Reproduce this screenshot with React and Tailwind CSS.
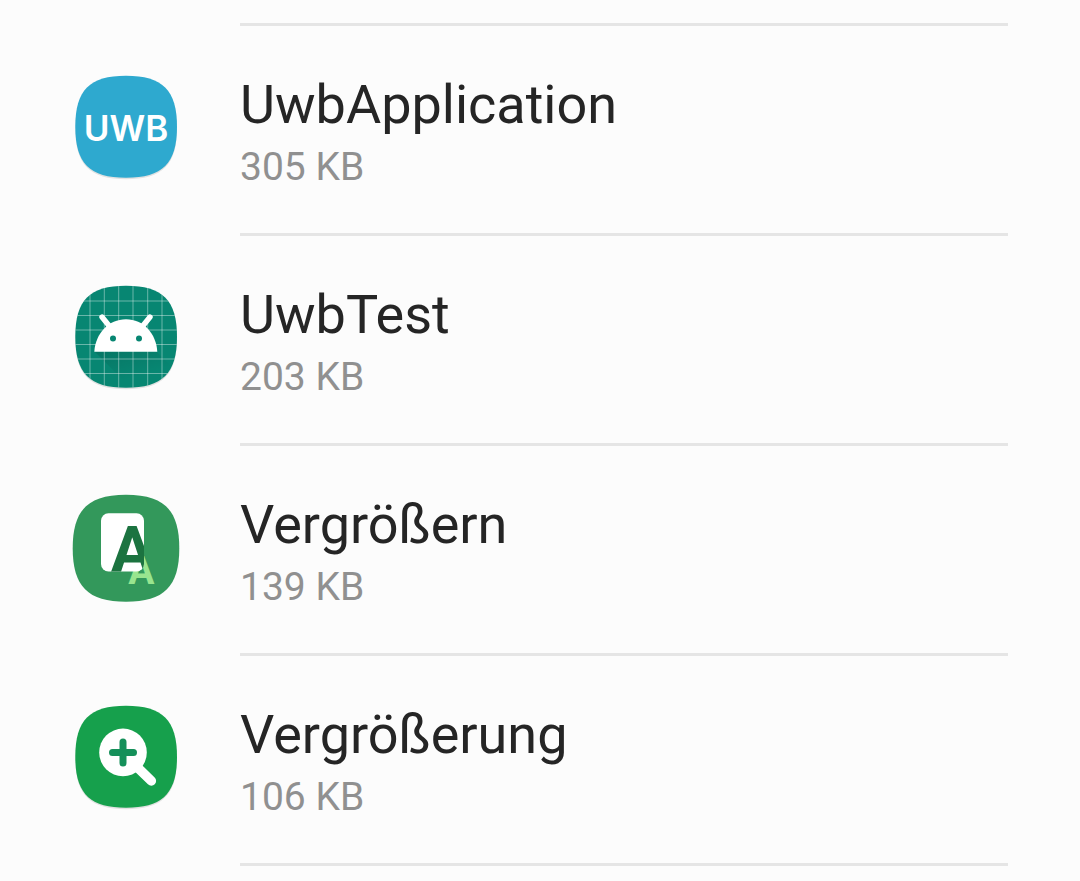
const SQUIRCLE = "M54 1.7C17.5 1.7 3.3 16 3.3 52.7S17.5 103.7 54 103.7S105 89.4 105 52.7S90.5 1.7 54 1.7Z";
const SQUIRCLE_LARGE = "M54 .7C16 .7 .7 16 .7 54.2S16 107.7 54 107.7S107.3 92.4 107.3 54.2S92 .7 54 .7Z";

function Shape({ color }) {
  return (
    <>
      <path d={SQUIRCLE} fill="#000" opacity="0.1" transform="translate(0 1.5)" />
      <path d={SQUIRCLE} fill={color} />
    </>
  );
}

function UwbIcon() {
  return (
    <svg viewBox="0 0 108 108" className="size-[108px] shrink-0" aria-hidden="true">
      <Shape color="#2ea9cf" />
      <text x="54" y="66.5" textAnchor="middle" fill="#fff" fontFamily="Inter, sans-serif" fontSize="35" fontWeight="600">UWB</text>
    </svg>
  );
}

function AndroidIcon() {
  return (
    <svg viewBox="0 0 108 108" className="size-[108px] shrink-0" aria-hidden="true">
      <defs>
        <clipPath id="android-shape">
          <path d={SQUIRCLE} />
        </clipPath>
        <linearGradient id="android-shadow" x1="0" y1="0" x2="0.5" y2="0.7">
          <stop offset="0" stopColor="#000" stopOpacity="0.12" />
          <stop offset="1" stopColor="#000" stopOpacity="0" />
        </linearGradient>
      </defs>
      <Shape color="#078672" />
      <g clipPath="url(#android-shape)">
        <path d="M23 68L59 104H105V88L85 68Z" fill="url(#android-shadow)" />
        <path d="M18 0V108M32.3 0V108M46.7 0V108M61 0V108M75.7 0V108M90 0V108M0 17H108M0 31.5H108M0 46H108M0 60.5H108M0 75H108M0 89.5H108"
          fill="none" stroke="#fff" strokeOpacity="0.4" strokeWidth="1" />
      </g>
      <path d="M30 33L38.5 43.5M78 33L69.5 43.5" stroke="#fff" strokeWidth="5.4" strokeLinecap="round" />
      <path d="M22.3 67.7C23.5 49.5 36.5 35.3 54 35.3S84.2 49.5 85.3 67.7Z" fill="#fff" />
      <circle cx="41" cy="54.4" r="3" fill="#078672" />
      <circle cx="67" cy="54.4" r="3" fill="#078672" />
    </svg>
  );
}

function MagnifyIcon() {
  return (
    <svg viewBox="0 0 108 108" className="size-[108px] shrink-0" aria-hidden="true">
      <defs>
        <clipPath id="magnify-page">
          <rect x="29" y="19.3" width="43" height="58.2" rx="7.5" />
        </clipPath>
      </defs>
      <path d={SQUIRCLE_LARGE} fill="#33985b" />
      <text x="69.3" y="90" textAnchor="middle" fill="#98e58f" fontFamily="Roboto, sans-serif" fontSize="39" fontWeight="700">A</text>
      <rect x="29" y="19.3" width="43" height="58.2" rx="7.5" fill="#fff" />
      <g clipPath="url(#magnify-page)">
        <text x="60.2" y="77.5" textAnchor="middle" fill="#1c7340" fontFamily="Roboto, sans-serif" fontSize="64" fontWeight="700">A</text>
      </g>
    </svg>
  );
}

function ZoomIcon() {
  return (
    <svg viewBox="0 0 108 108" className="size-[108px] shrink-0" aria-hidden="true">
      <Shape color="#16a04c" />
      <path d="M64 62L79.3 76.9" stroke="#fff" strokeWidth="9.6" strokeLinecap="round" />
      <circle cx="51" cy="48.4" r="23.8" fill="#fff" />
      <path d="M40.5 48.6H61.5M51 38.1V59.1" stroke="#15905a" strokeWidth="7" strokeLinecap="round" />
    </svg>
  );
}

const apps = [
  { name: "UwbApplication", size: "305 KB", Icon: UwbIcon },
  { name: "UwbTest", size: "203 KB", Icon: AndroidIcon },
  { name: "Vergrößern", size: "139 KB", Icon: MagnifyIcon },
  { name: "Vergrößerung", size: "106 KB", Icon: ZoomIcon },
];

export default function App() {
  return (
    <main className="min-h-screen bg-[#fcfcfc] font-['Roboto',sans-serif] px-[72px] pt-[23px]">
      <div className="ml-[168px] border-t-3 border-[#e5e5e5]" />
      <ul>
        {apps.map(({ name, size, Icon }) => (
          <li key={name} className="flex gap-[60px]">
            <div className="pt-12">
              <Icon />
            </div>
            <div className="flex-1 border-b-3 border-[#e5e5e5] pt-[47px] pb-[42px]">
              <p className="text-[54px] leading-16 text-[#252525]">{name}</p>
              <p className="mt-1.5 text-[39px] leading-12 text-[#909090]">{size}</p>
            </div>
          </li>
        ))}
      </ul>
    </main>
  );
}
